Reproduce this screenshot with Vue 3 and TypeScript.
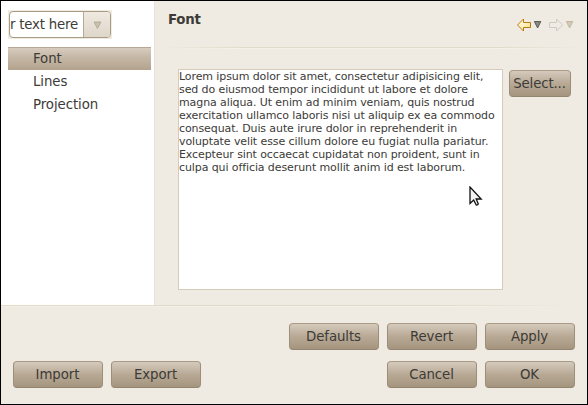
<script setup lang="ts">
import { ref } from 'vue'

const pages: string[] = ['Font', 'Lines', 'Projection']
const selected = ref<string>('Font')
const sample: string[] = [
  'Lorem ipsum dolor sit amet, consectetur adipisicing elit,',
  'sed do eiusmod tempor incididunt ut labore et dolore',
  'magna aliqua. Ut enim ad minim veniam, quis nostrud',
  'exercitation ullamco laboris nisi ut aliquip ex ea commodo',
  'consequat. Duis aute irure dolor in reprehenderit in',
  'voluptate velit esse cillum dolore eu fugiat nulla pariatur.',
  'Excepteur sint occaecat cupidatat non proident, sunt in',
  'culpa qui officia deserunt mollit anim id est laborum.',
]
</script>

<template>
  <div class="dialog">
    <div class="upper">
      <aside class="sidebar">
        <div class="combo">
          <div class="combo-box">
            <div class="combo-text">r text here</div>
            <div class="combo-drop">
              <svg width="9" height="8" viewBox="0 0 9 8">
                <path d="M1 1h7L4.5 7.5z" fill="#c9bfad" stroke="#b0a48e" stroke-width="0.8" />
              </svg>
            </div>
          </div>
        </div>
        <ul class="tree">
          <li
            v-for="page in pages"
            :key="page"
            :class="{ selected: page === selected }"
            @click="selected = page"
          >{{ page }}</li>
        </ul>
      </aside>
      <main class="page">
        <header class="title-bar">
          <h1>Font</h1>
          <nav class="history">
            <svg width="58" height="14" viewBox="0 0 58 14">
              <defs>
                <linearGradient id="gold" x1="0" y1="0" x2="1" y2="1">
                  <stop offset="0" stop-color="#fffbe8" />
                  <stop offset="0.5" stop-color="#fff2c0" />
                  <stop offset="1" stop-color="#ffd56a" />
                </linearGradient>
              </defs>
              <path d="M.5 7L6.500 1V4.500H13.500V9.500H6.500V13z" fill="url(#gold)" stroke="#b87a10" stroke-linejoin="round" />
              <path d="M17.400 3.500h6.400L20.600 10z" fill="#898885" stroke="#5c5b58" stroke-linejoin="round" />
              <path d="M45.500 7L39.500 1V4.500H32.500V9.500H39.500V13z" fill="#f0ece5" stroke="#cdcac3" stroke-linejoin="round" />
              <path d="M49.400 3.500h6.400L52.600 10z" fill="#d2c8b6" stroke="#c4b8a2" stroke-linejoin="round" />
            </svg>
          </nav>
        </header>
        <div class="rule title-rule"></div>
        <section class="preview">
          <div class="text-area">
            <div v-for="line in sample" :key="line" class="line">{{ line }}</div>
          </div>
          <button class="btn select">Select...</button>
        </section>
      </main>
    </div>
    <div class="rule"></div>
    <footer class="actions">
      <div class="row end">
        <button class="btn">Defaults</button>
        <button class="btn">Revert</button>
        <button class="btn">Apply</button>
      </div>
      <div class="row">
        <button class="btn">Import</button>
        <button class="btn">Export</button>
        <span class="spacer"></span>
        <button class="btn">Cancel</button>
        <button class="btn">OK</button>
      </div>
    </footer>
    <svg class="pointer" width="14" height="21" viewBox="0 0 14 21">
      <path d="M1 1V17.500L4.700 14L7.200 19Q8.500 19.500 9.300 18L7.200 13H12.200z" fill="#f4f4f4" stroke="#111" stroke-width="1.300" />
    </svg>
  </div>
</template>

<style>
body {
  margin: 0;
  overflow: hidden;
}
</style>

<style scoped>
.dialog {
  position: relative;
  box-sizing: border-box;
  width: 588px;
  height: 405px;
  border: 1px solid #000;
  background: #efebe3;
  color: #3c3b37;
  font: 13.333px/23px "DejaVu Sans", sans-serif;
  letter-spacing: -0.08px;
  display: flex;
  flex-direction: column;
}
.upper {
  display: flex;
  height: 304px;
}
.sidebar {
  box-sizing: border-box;
  width: 153px;
  padding: 9px 3px 0 7px;
  background: #fff;
}
.combo {
  width: 102px;
  padding: 1px;
  background: #efebe3;
}
.combo-box {
  display: flex;
  box-sizing: border-box;
  width: 102px;
  height: 27px;
  border: 1px solid #a89c84;
  border-radius: 4px;
  background: #fff;
}
.combo-text {
  flex: 1;
  min-width: 0;
  white-space: nowrap;
  letter-spacing: -0.22px;
  line-height: 25px;
}
.combo-drop {
  box-sizing: border-box;
  width: 27px;
  flex: none;
  border-left: 1px solid #b5aa96;
  border-radius: 0 3px 3px 0;
  background: linear-gradient(#efe9e1, #dfd6ca);
  display: flex;
  align-items: center;
  justify-content: center;
}
.tree {
  list-style: none;
  margin: 8px 0 0;
  padding: 0;
}
.tree li {
  height: 23px;
  padding-left: 25px;
}
.tree .selected {
  background: linear-gradient(#b5a996 0 1px, #d7ccbf 1px, #c6b8a7 10px, #b3a38d);
}
.page {
  flex: 1;
  display: flex;
  flex-direction: column;
  border-left: 1px solid #e9e3d7;
}
.title-bar {
  display: flex;
  justify-content: space-between;
  height: 46px;
  padding: 0 12px 0 13px;
}
h1 {
  margin: 7px 0 0;
  font-size: 13.333px;
  line-height: 23px;
  letter-spacing: -0.2px;
}
.history {
  margin-top: 17px;
  height: 14px;
  line-height: 0;
}
.rule {
  height: 2px;
  flex: none;
  background: linear-gradient(#e2dbca 0 1px, #f4f0e7 1px);
  -webkit-mask-image: linear-gradient(90deg, #000 75%, transparent 97%);
  mask-image: linear-gradient(90deg, #000 75%, transparent 97%);
}
.title-rule {
  -webkit-mask-image: linear-gradient(90deg, transparent 1%, #000 20%, #000 80%, transparent 99%);
  mask-image: linear-gradient(90deg, transparent 1%, #000 20%, #000 80%, transparent 99%);
}
.preview {
  display: flex;
  align-items: flex-start;
  gap: 6px;
  padding: 20px 0 0 23px;
}
.text-area {
  box-sizing: border-box;
  width: 325px;
  height: 221px;
  border: 1px solid #d6cbb9;
  background: #fff;
  font-size: 11px;
  letter-spacing: -0.1px;
  line-height: 13px;
  white-space: nowrap;
}
.btn {
  box-sizing: border-box;
  width: 90px;
  height: 27px;
  flex: none;
  padding: 0 1px 1px 0;
  border: 1px solid;
  border-color: #a99b86 #9c8e79 #938570;
  border-radius: 4px;
  background: linear-gradient(#d5cabc, #b8a995 50%, #a5957f);
  color: #3c3b37;
  font: inherit;
  letter-spacing: inherit;
}
.btn.select {
  width: 62px;
  margin-top: 1px;
  letter-spacing: -0.15px;
}
.actions {
  display: flex;
  flex-direction: column;
  gap: 11px;
  padding: 16px 12px 0;
}
.row {
  display: flex;
  gap: 8px;
  height: 27px;
}
.end {
  justify-content: flex-end;
}
.spacer {
  flex: 1;
}
.pointer {
  position: absolute;
  left: 468px;
  top: 185px;
}
</style>
